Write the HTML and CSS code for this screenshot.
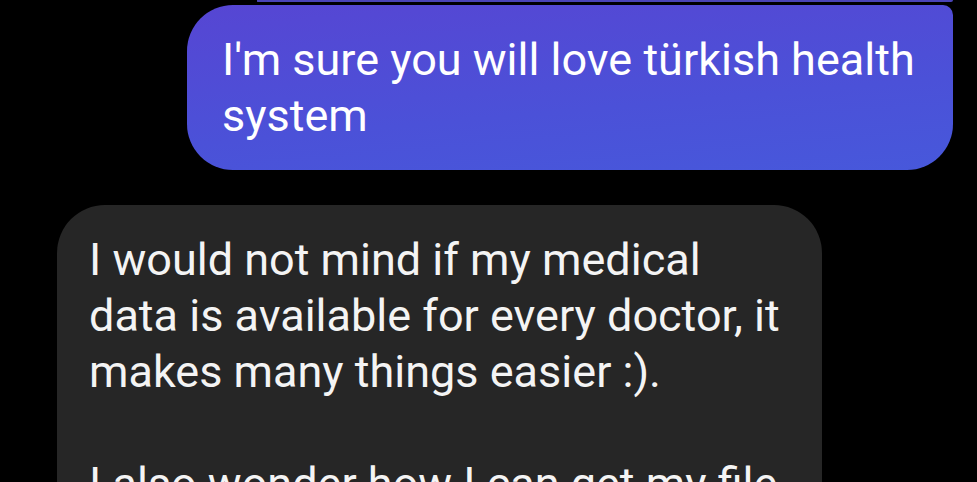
FILE: index.html
```html
<!DOCTYPE html>
<html lang="en">
<head>
    <meta charset="UTF-8">
    <meta name="viewport" content="width=device-width, initial-scale=1.0">
    <title>Chat</title>
    <link rel="stylesheet" href="styles.css">
</head>
<body>

    <div class="thread">
        <!-- tail of the previous sent message, scrolled off the top -->
        <div class="bubble sent prev"></div>

        <div class="bubble sent">
            <p>I'm sure you will love türkish health system</p>
        </div>

        <div class="bubble received">
            <p>I would not mind if my medical data is available for every doctor, it makes many things easier :).</p>
            <p>I also wonder how I can get my file</p>
        </div>
    </div>

</body>
</html>
```

FILE: styles.css
```css
* {
    margin: 0;
    padding: 0;
    box-sizing: border-box;
}

body {
    font-family: Roboto, 'Noto Sans', sans-serif;
    background: #000;
    color: #f4f4f4;
    height: 100vh;
    overflow: hidden;
}

.thread {
    display: flex;
    flex-direction: column;
    padding: 0 24px 0 57px;
}

.bubble {
    font-size: 45px;
    line-height: 56px;
}

.bubble p + p {
    margin-top: 56px;
}

.sent {
    align-self: flex-end;
    max-width: 766px;
    padding: 27px 36px 26px 35px;
    background: linear-gradient(175deg, #5646d3 0%, #4b51d8 60%, #4758db 100%);
    border-radius: 46px 10px 46px 46px;
    margin-top: 3px;
    color: #fff;
}

.prev {
    width: 696px;
    height: 2px;
    margin-top: 0;
    padding: 0;
    border-radius: 0 0 10px 2px;
    background: #4a44b8;
}

.received {
    align-self: flex-start;
    max-width: 765px;
    padding: 27px 30px 28px 32px;
    margin-top: 35px;
    background: #262626;
    border-radius: 48px;
}
```
